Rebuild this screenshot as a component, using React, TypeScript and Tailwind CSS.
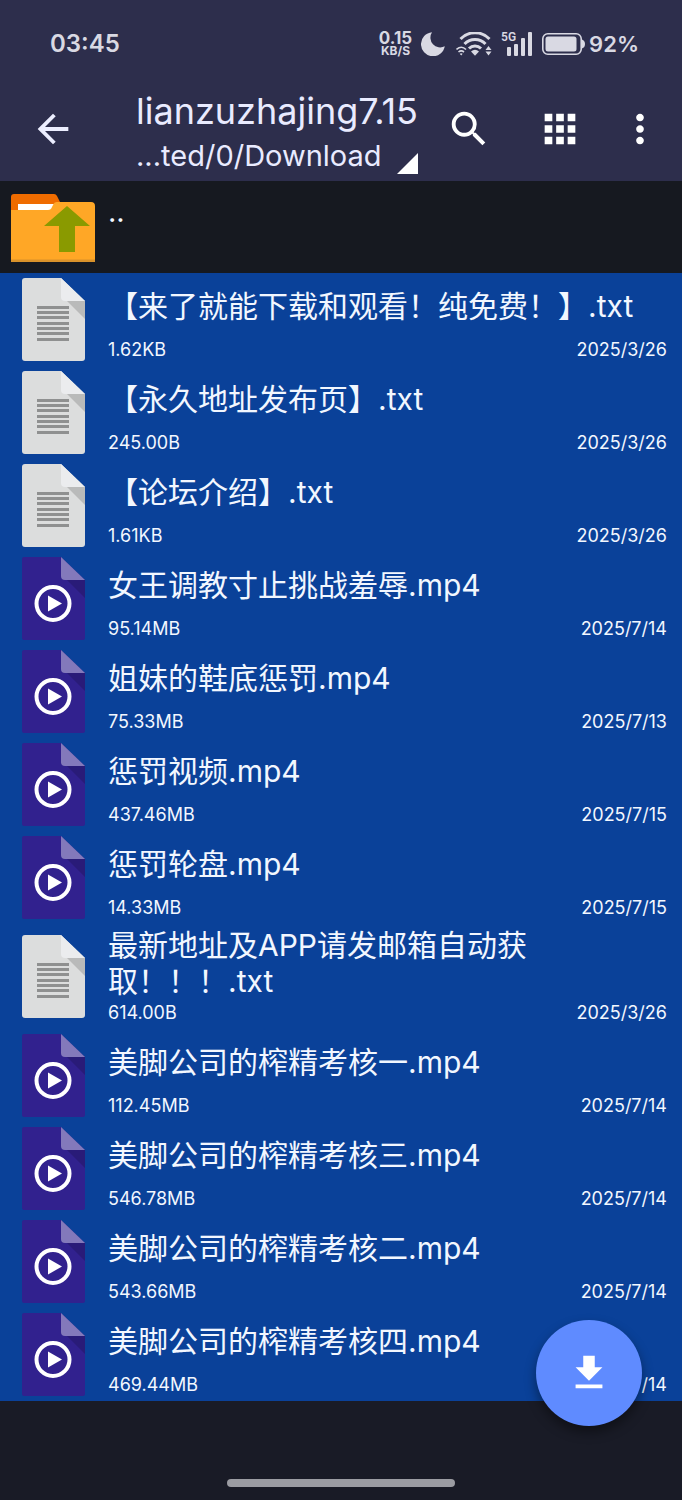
type TFile = {
  name: string;
  size: string;
  date: string;
  kind: "text" | "video";
};

const files: TFile[] = [
  { name: "【来了就能下载和观看！纯免费！】.txt", size: "1.62KB", date: "2025/3/26", kind: "text" },
  { name: "【永久地址发布页】.txt", size: "245.00B", date: "2025/3/26", kind: "text" },
  { name: "【论坛介绍】.txt", size: "1.61KB", date: "2025/3/26", kind: "text" },
  { name: "女王调教寸止挑战羞辱.mp4", size: "95.14MB", date: "2025/7/14", kind: "video" },
  { name: "姐妹的鞋底惩罚.mp4", size: "75.33MB", date: "2025/7/13", kind: "video" },
  { name: "惩罚视频.mp4", size: "437.46MB", date: "2025/7/15", kind: "video" },
  { name: "惩罚轮盘.mp4", size: "14.33MB", date: "2025/7/15", kind: "video" },
  { name: "最新地址及APP请发邮箱自动获取！！！.txt", size: "614.00B", date: "2025/3/26", kind: "text" },
  { name: "美脚公司的榨精考核一.mp4", size: "112.45MB", date: "2025/7/14", kind: "video" },
  { name: "美脚公司的榨精考核三.mp4", size: "546.78MB", date: "2025/7/14", kind: "video" },
  { name: "美脚公司的榨精考核二.mp4", size: "543.66MB", date: "2025/7/14", kind: "video" },
  { name: "美脚公司的榨精考核四.mp4", size: "469.44MB", date: "2025/7/14", kind: "video" },
];

const Icon = ({ d }: { d: string }) => (
  <svg className="size-[46px]" viewBox="0 0 24 24" fill="currentColor" aria-hidden="true">
    <path d={d} />
  </svg>
);

const TextFileIcon = () => (
  <svg className="h-[83px] w-[63px] shrink-0" viewBox="0 0 63 83" aria-hidden="true">
    <path d="M3 0h36l24 23v57a3 3 0 0 1-3 3H3a3 3 0 0 1-3-3V3a3 3 0 0 1 3-3z" fill="#dcdddd" />
    <path d="M39 0l24 23H43a4 4 0 0 1-4-4z" fill="#ebecee" />
    <path d="M45 23h18v18z" fill="#b9baba" />
    {[28, 33, 38, 44, 49, 54, 60].map((y) => (
      <rect key={y} x="15" y={y} width="32" height="3" fill="#8f9090" />
    ))}
  </svg>
);

const VideoFileIcon = () => (
  <svg className="h-[83px] w-[63px] shrink-0" viewBox="0 0 63 83" aria-hidden="true">
    <path d="M2 0h37l24 23v58a2 2 0 0 1-2 2H2a2 2 0 0 1-2-2V2a2 2 0 0 1 2-2z" fill="#31218e" />
    <path d="M39 0l24 23H43a4 4 0 0 1-4-4z" fill="#8379bb" />
    <path d="M45 23h18v18z" fill="#291b78" />
    <circle cx="31" cy="46.5" r="16.5" fill="none" stroke="#fff" strokeWidth="4" />
    <path d="M26 38.5v16l14-8z" fill="#fff" />
  </svg>
);

const FolderUpIcon = () => (
  <svg className="h-[68px] w-[84px] shrink-0" viewBox="0 0 84 68" aria-hidden="true">
    <path d="M3 0h40q2 0 3 2l5 10v20H0V3a3 3 0 0 1 3-3z" fill="#ef6c00" />
    <path d="M7 10h37v10H7z" fill="#fff" />
    <path d="M0 16h37q3 0 4-3l1-2q1-3 4-3h34a4 4 0 0 1 4 4v56H0z" fill="#ffa726" />
    <path d="M0 65.5h84V68H0z" fill="#d9922b" />
    <path d="M56 12l23 20H64v26H48V32H33z" fill="#8a9a00" />
  </svg>
);

const StatusBar = () => (
  <div className="flex h-[88px] items-center justify-between pr-[43px] pl-[50px] font-semibold text-[#d9d9e3]">
    <time className="text-[24px] leading-[28px]">03:45</time>
    <div className="flex items-center">
      <div className="mr-[9px] text-center font-bold">
        <div className="text-[17px] leading-[14px]">0.15</div>
        <div className="text-[12px] leading-[12px]">KB/S</div>
      </div>
      <svg className="mr-[10px] h-[24px] w-[25px]" viewBox="0 0 25 24" fill="currentColor">
        <path d="M11 .3A9.800 9.800 0 0 0 23.800 14.300 12 12 0 1 1 11 .3z" />
      </svg>
      <svg className="mr-[9px] h-[24px] w-[36px]" viewBox="0 0 36 24" fill="none" stroke="currentColor">
        <path d="M4.500 7a20 20 0 0 1 29 0" strokeWidth="3" />
        <path d="M8.500 12a14.500 14.500 0 0 1 21 0" strokeWidth="3" />
        <path d="M13 16.500a8.500 8.500 0 0 1 12 0" strokeWidth="3" />
        <path d="M15 19.500q4-3.500 8 0l-4 4.200z" fill="currentColor" stroke="none" />
        <path d="M.5 17.500q5-4.500 9.500 0M2.500 20q2.700-2.200 5.500 0" strokeWidth="1.600" />
        <path d="M3.700 21.800q1.500-1.200 3 0l-1.500 1.700zM29.500 18l3-4 3 4zM29.500 19.500h6l-3 4z" fill="currentColor" stroke="none" />
      </svg>
      <div className="mr-[10px] flex h-[24px] w-[31px] items-start">
        <span className="w-0 font-['Roboto'] text-[12px] leading-[10px]">5G</span>
        <svg className="h-[24px] w-[31px] shrink-0" viewBox="0 0 31 24" fill="currentColor">
          <rect x="6" y="15" width="4" height="9" rx="1" />
          <rect x="13" y="12" width="4" height="12" rx="1" />
          <rect x="20" y="6" width="4" height="18" rx="1" />
          <rect x="27" y="0" width="4" height="24" rx="1" />
        </svg>
      </div>
      <svg className="mr-[4px] h-[22px] w-[43px]" viewBox="0 0 43 22" fill="currentColor">
        <rect x=".8" y=".8" width="38.4" height="20.4" rx="5" fill="none" stroke="currentColor" strokeWidth="1.6" />
        <rect x="3.5" y="3.5" width="31" height="15" rx="2.5" />
        <path d="M40 6.500q3 1 3 4.500t-3 4.500z" />
      </svg>
      <span className="text-[22px] leading-[28px]">92%</span>
    </div>
  </div>
);

const AppBar = () => (
  <div className="flex h-[93px] pr-[19px] pl-[30px] text-white">
    <button type="button" aria-label="返回" className="mt-[18px] mr-[60px] size-[46px] shrink-0 text-[#eceeff]">
      <Icon d="M20 11H7.830l5.590-5.590L12 4l-8 8 8 8 1.410-1.410L7.830 13H20v-2z" />
    </button>
    <div className="mr-auto text-[#e9ebff]">
      <h1 className="text-[36px] leading-[46px]">lianzuzhajing7.15</h1>
      <button type="button" className="flex w-full items-end justify-between text-[29px] leading-[44px]">
        <span>...ted/0/Download</span>
        <svg className="mb-[4px] size-[21px]" viewBox="0 0 21 21" fill="#fff" aria-hidden="true">
          <path d="M21 0v21H0z" />
        </svg>
      </button>
    </div>
    <button type="button" aria-label="搜索" className="mt-[18px] mr-[45px] size-[46px] shrink-0">
      <Icon d="M15.500 14h-.790l-.280-.270A6.471 6.471 0 0 0 16 9.500 6.500 6.500 0 1 0 9.500 16c1.610 0 3.090-.590 4.230-1.570l.270.280v.790l5 4.990L20.490 19l-4.990-5zm-6 0C7.010 14 5 11.990 5 9.500S7.010 5 9.500 5 14 7.010 14 9.500 11.990 14 9.500 14z" />
    </button>
    <button type="button" aria-label="网格" className="mt-[18px] mr-[34px] size-[46px] shrink-0">
      <Icon d="M4 8h4V4H4v4zm6 12h4v-4h-4v4zm-6 0h4v-4H4v4zm0-6h4v-4H4v4zm6 0h4v-4h-4v4zm6-10v4h4V4h-4zm-6 4h4V4h-4v4zm6 6h4v-4h-4v4zm0 6h4v-4h-4v4z" />
    </button>
    <button type="button" aria-label="更多" className="mt-[18px] size-[46px] shrink-0">
      <Icon d="M12 8c1.100 0 2-.900 2-2s-.900-2-2-2-2 .900-2 2 .900 2 2 2zm0 2c-1.100 0-2 .900-2 2s.900 2 2 2 2-.900 2-2-.900-2-2-2zm0 6c-1.100 0-2 .900-2 2s.900 2 2 2 2-.900 2-2-.900-2-2-2z" />
    </button>
  </div>
);

const FileRow = ({ file }: { file: TFile }) => (
  <li className="flex items-center gap-[23px] bg-[#0a4199] py-[3px] pr-[15px] pl-[22px]">
    {file.kind === "text" ? <TextFileIcon /> : <VideoFileIcon />}
    <div className="min-w-0 flex-1">
      <div className="flex min-h-[60px] items-center text-[30px] leading-[36px]">
        <span>{file.name}</span>
      </div>
      <div className="flex justify-between text-[18px] leading-[27px]">
        <span>{file.size}</span>
        <time>{file.date}</time>
      </div>
    </div>
  </li>
);

const App = () => {
  return (
    <div
      lang="zh-CN"
      className="relative flex min-h-screen flex-col bg-[#191b26] font-['Inter','Noto_Sans_CJK_SC',sans-serif] text-[#f2f7ff] [text-spacing-trim:space-all]"
    >
      <header className="bg-[#2d2e4c]">
        <StatusBar />
        <AppBar />
      </header>
      <main>
        <a href="#parent" className="flex h-[92px] gap-[13px] bg-[#161920] pt-[13px] pl-[11px]">
          <FolderUpIcon />
          <span className="text-[29px] leading-[36px]">..</span>
        </a>
        <ul>
          {files.map((file) => (
            <FileRow key={file.name} file={file} />
          ))}
        </ul>
      </main>
      <div className="mx-auto mt-auto mb-[13px] h-[8px] w-1/3 rounded-full bg-[#9b9ca2]" />
      <button
        type="button"
        aria-label="下载"
        className="fixed right-[40px] bottom-[74px] flex size-[106px] items-center justify-center rounded-full bg-[#5f8bff] text-white shadow-[0_6px_12px_rgba(0,0,0,0.4)]"
      >
        <Icon d="M19 9h-4V3H9v6H5l7 7 7-7zM5 18v2h14v-2H5z" />
      </button>
    </div>
  );
};

export default App;
